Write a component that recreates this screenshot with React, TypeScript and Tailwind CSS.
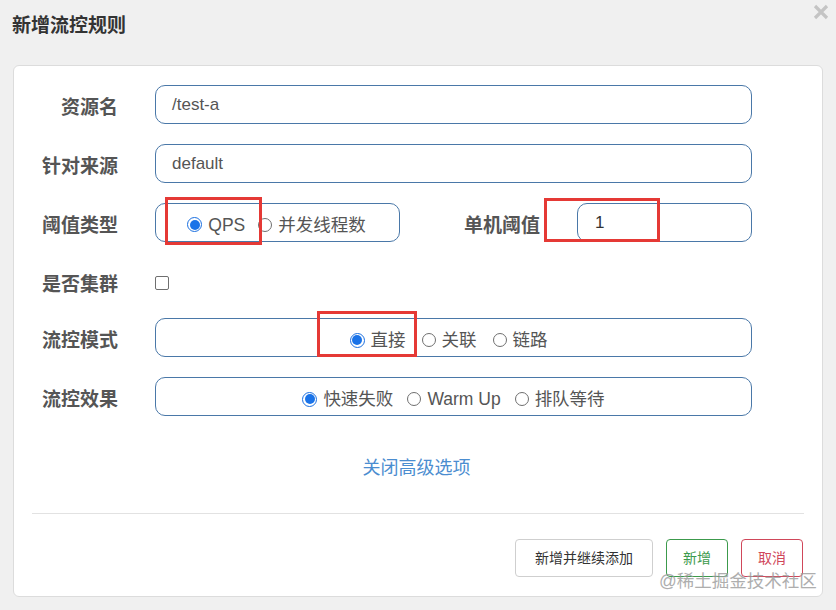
import React from "react";

const FONT = { fontFamily: '"Liberation Sans", "Noto Sans CJK SC", sans-serif' };

function Radio({ checked, label }: { checked?: boolean; label: string }) {
  return (
    <span className="flex items-center gap-[6px]">
      {checked ? (
        <span className="w-[15px] h-[15px] rounded-full border border-[#1a6fe0] bg-white flex items-center justify-center">
          <span className="w-[10px] h-[10px] rounded-full bg-[#1a73e8]" />
        </span>
      ) : (
        <span className="w-[14px] h-[14px] rounded-full border border-[#6f6f6f] bg-white" />
      )}
      <span className="text-[17.5px] text-[#555] leading-none pt-[2px]">{label}</span>
    </span>
  );
}

function Label({ children, w = "w-[104px]" }: { children: React.ReactNode; w?: string }) {
  return (
    <div className={`${w} text-right text-[19px] font-bold text-[#555] leading-none shrink-0 pt-[5px]`}>{children}</div>
  );
}

export default function App() {
  return (
    <div className="relative w-[836px] h-[610px] bg-[#f0f0f0] overflow-hidden" style={FONT}>
      {/* title */}
      <div className="h-[65px] pl-[12px] pt-[14px]">
        <div className="text-[19px] font-bold text-[#333] leading-[24px]">新增流控规则</div>
      </div>
      <svg className="absolute left-[813px] top-[4px]" width="16" height="16" viewBox="0 0 16 16">
        <path d="M2 2 L14 14 M14 2 L2 14" stroke="#c4c4c4" strokeWidth="3.2" strokeLinecap="butt" />
      </svg>

      {/* panel */}
      <div className="ml-[13px] w-[810px] h-[532px] bg-white border border-[#dcdcdc] rounded-[6px] flex flex-col">
        <div className="flex flex-col pt-[19px]">
          {/* row 1 */}
          <div className="flex items-center h-[39px]">
            <Label>资源名</Label>
            <div className="ml-[37px] w-[597px] h-[39px] border border-[#4a78a8] rounded-[10px] flex items-center pl-[16px] text-[17px] text-[#555]">
              /test-a
            </div>
          </div>
          {/* row 2 */}
          <div className="flex items-center h-[39px] mt-[20px]">
            <Label>针对来源</Label>
            <div className="ml-[37px] w-[597px] h-[39px] border border-[#4a78a8] rounded-[10px] flex items-center pl-[16px] text-[17px] text-[#555]">
              default
            </div>
          </div>
          {/* row 3 */}
          <div className="flex items-center h-[39px] mt-[20px]">
            <Label>阈值类型</Label>
            <div className="ml-[37px] w-[245px] h-[39px] border border-[#4a78a8] rounded-[10px] flex items-center justify-center gap-[13px] pt-[4px] pr-[2px]">
              <Radio checked label="QPS" />
              <Radio label="并发线程数" />
            </div>
            <Label w="w-[140px]">单机阈值</Label>
            <div className="ml-[37px] w-[175px] h-[39px] border border-[#4a78a8] rounded-[10px] flex items-center pl-[17px] text-[17px] text-[#333]">
              1
            </div>
          </div>
          {/* row 4 */}
          <div className="flex items-center h-[39px] mt-[20px]">
            <Label>是否集群</Label>
            <div className="ml-[37px] w-[14px] h-[14px] border border-[#6f6f6f] rounded-[2px] bg-white mt-[2px]" />
          </div>
          {/* row 5 */}
          <div className="flex items-center h-[39px] mt-[17px]">
            <Label>流控模式</Label>
            <div className="ml-[37px] w-[597px] h-[39px] border border-[#4a78a8] rounded-[10px] flex items-center justify-center gap-[16px] pt-[5px] pr-[10px]">
              <Radio checked label="直接" />
              <Radio label="关联" />
              <Radio label="链路" />
            </div>
          </div>
          {/* row 6 */}
          <div className="flex items-center h-[39px] mt-[20px]">
            <Label>流控效果</Label>
            <div className="ml-[37px] w-[597px] h-[39px] border border-[#4a78a8] rounded-[10px] flex items-center justify-center gap-[14px] pt-[5px]">
              <Radio checked label="快速失败" />
              <Radio label="Warm Up" />
              <Radio label="排队等待" />
            </div>
          </div>
          {/* link */}
          <div className="flex justify-center mt-[40px] pr-[3px]">
            <span className="text-[18px] text-[#4b8dd0] leading-[24px]">关闭高级选项</span>
          </div>
        </div>
        {/* separator */}
        <div className="mx-[18px] mt-[33px] h-px bg-[#e2e2e2]" />
        {/* buttons */}
        <div className="flex justify-end gap-[13px] mr-[19px] mt-[25px]">
          <div className="w-[138px] h-[38px] border border-[#cfcfcf] rounded-[4px] flex items-center justify-center text-[14px] text-[#333]">
            新增并继续添加
          </div>
          <div className="w-[62px] h-[38px] border border-[#3c9a4c] rounded-[4px] flex items-center justify-center text-[14px] text-[#3c9a4c]">
            新增
          </div>
          <div className="w-[62px] h-[38px] border border-[#d0475a] rounded-[4px] flex items-center justify-center text-[14px] text-[#d0475a]">
            取消
          </div>
        </div>
      </div>

      {/* annotations */}
      <div className="absolute left-[165px] top-[197px] w-[97px] h-[48px] border-[3px] border-[#e53935]" />
      <div className="absolute left-[544px] top-[198px] w-[116px] h-[44px] border-[3px] border-[#e53935]" />
      <div className="absolute left-[317px] top-[311px] w-[100px] h-[46px] border-[3px] border-[#e53935]" />

      {/* watermark */}
      <div className="absolute left-[659px] top-[569px] text-[17.5px] text-[#9a9a9a] opacity-80 leading-[24px]">
        @稀土掘金技术社区
      </div>
    </div>
  );
}
